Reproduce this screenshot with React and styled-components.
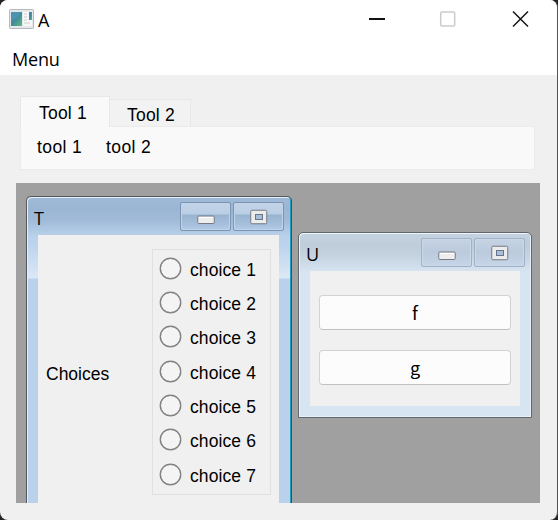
import React from "react";
import styled, { createGlobalStyle } from "styled-components";

const GlobalStyle = createGlobalStyle`
  * { box-sizing: border-box; }
  body { margin: 0; background: #242424; overflow: hidden; }
`;

const AppWindow = styled.div`
  width: 558px;
  height: 520px;
  display: flex;
  flex-direction: column;
  background: #f0f0f0;
  border-right: 1px solid #555;
  border-radius: 8px;
  overflow: hidden;
  color: #000;
  font-family: "Liberation Sans", sans-serif;
`;

const TitleBar = styled.header`
  height: 38px;
  flex: none;
  display: flex;
  align-items: center;
  padding-left: 9px;
  background: #fff;
`;

const AppTitle = styled.span`
  flex: 1;
  margin-left: 4px;
  padding-top: 1px;
  font: 18px/24px "Open Sans", sans-serif;
`;

const Controls = styled.div`
  display: flex;
  height: 38px;
`;

const MenuBar = styled.nav`
  height: 37px;
  flex: none;
  padding: 9px 12px;
  background: #fff;
  font: 18px/24px "Open Sans", sans-serif;
  letter-spacing: -0.2px;
`;

const Ribbon = styled.section`
  margin: 21px 22px 0 20px;
  flex: none;
`;

const TabList = styled.div`
  display: flex;
  align-items: flex-end;
  height: 30px;
`;

const Tab = styled.div`
  width: ${(p) => (p.$active ? 90 : 81)}px;
  height: ${(p) => (p.$active ? 31 : 27)}px;
  margin-bottom: ${(p) => (p.$active ? -1 : 0)}px;
  position: relative;
  border: 1px solid #e8e8e8;
  border-bottom: 0;
  border-left-width: ${(p) => (p.$active ? 1 : 0)}px;
  background: ${(p) => (p.$active ? "#f9f9f9" : "#f2f2f2")};
  padding: ${(p) => (p.$active ? "4px 0 0 18px" : "3px 0 0 17px")};
`;

const Label = styled.span`
  display: inline-block;
  font: 17.5px/25px "Liberation Sans", sans-serif;
  line-height: ${(p) => p.$line || 25}px;
  white-space: nowrap;
  letter-spacing: ${(p) => p.$spacing || 0}px;
`;

const ToolRow = styled.div`
  height: 44px;
  display: flex;
  padding: 8px 0 0 16px;
  background: #f9f9f9;
  border: 1px solid #ebebeb;
`;

const Tool = styled.div`
  width: 69px;
`;

const Workspace = styled.main`
  position: relative;
  width: 524px;
  height: 320px;
  margin: 13px 0 0 16px;
  background: #a0a0a0;
  overflow: hidden;
`;

const ChildWindow = styled.section`
  position: absolute;
  left: ${(p) => p.$x}px;
  top: ${(p) => p.$y}px;
  width: ${(p) => p.$w}px;
  height: ${(p) => p.$h}px;
  display: flex;
  flex-direction: column;
  padding: 0 ${(p) => (p.$active ? 12 : 11)}px 11px 11px;
  border: 1px solid ${(p) => (p.$active ? "#55595d" : "#62676c")};
  border-right-color: ${(p) => (p.$active ? "#255b69" : "#62676c")};
  border-radius: 5px 5px 0 0;
  box-shadow: ${(p) =>
    p.$active
      ? "inset 1px 1px #e4effa, inset -1px 0 #249bbd"
      : "inset 1px 1px #edf5fc, inset -1px -1px #e5f2fc"};
  background: ${(p) =>
    p.$active
      ? "linear-gradient(#9fbad7 0, #9bb6d4 12px, #a0bad7 23px, #b9d1ea 39px, #bcd3ed 48px, #dce8f5 81px, #b9d1ea 82px)"
      : "linear-gradient(#c5d2df 0, #bfcddb 12px, #c5d2e0 23px, #d7e4f2 39px)"};
`;

const ChildTitleBar = styled.header`
  height: 38px;
  flex: none;
  display: flex;
  gap: 2px;
  padding-top: 5px;
  margin: 0 -5px 0 -4px;
`;

const ChildTitle = styled.span`
  flex: 1;
  padding-top: 4px;
  font: 18px/25px "Open Sans", sans-serif;
`;

const FrameButton = styled.div`
  width: 51px;
  height: 29px;
  display: grid;
  place-items: center;
  border: 1px solid ${(p) => (p.$active ? "#7d94b2" : "#a1b1c8")};
  border-radius: 2px;
  box-shadow: inset 0 0 0 1px ${(p) => (p.$active ? "#c0d2e6" : "#cad8e8")};
  background: ${(p) =>
    p.$active
      ? "linear-gradient(#c2d4e9 0, #b9cde4 11px, #98b4d1 12px, #a7c0dc 22px, #b9d0ea 29px)"
      : "linear-gradient(#c5d3e4, #bccadd 13px, #c6d5e7)"};
`;

const Content = styled.div`
  flex: 1;
  min-height: 0;
  background: #f0f0f0;
`;

const ChoiceForm = styled(Content)`
  display: flex;
  justify-content: space-between;
  padding: 14px 8px 0 8px;
`;

const FieldLabel = styled.div`
  padding-top: 113px;
`;

const RadioGroup = styled.div`
  width: 119px;
  height: 246px;
  padding: 1px 0 0 7px;
  border: 1px solid #e0e0e0;
`;

const RadioRow = styled.label`
  height: 34.35px;
  display: flex;
  align-items: center;
  gap: 9px;
`;

const RadioCircle = styled.span`
  width: 21px;
  height: 21px;
  flex: none;
  border: 1.5px solid #777;
  border-radius: 50%;
  background: #f4f4f4;
  box-shadow: 0 0 0 0.4px #888;
`;

const RadioText = styled(Label)`
  padding-top: 4px;
`;

const ButtonStack = styled(Content)`
  display: flex;
  flex-direction: column;
  gap: 20px;
  padding: 24px 9px;
`;

const PushButton = styled.button`
  height: 35px;
  flex: none;
  padding: 0;
  border: 1px solid #d2d2d2;
  border-bottom-color: #c2c2c2;
  border-radius: 4px;
  background: #fcfcfc;
  color: #000;
`;

const ButtonText = styled.span`
  font: 18px/25px "Noto Sans CJK JP", sans-serif;
`;

function AppIcon() {
  return (
    <svg width="25" height="20" viewBox="0 0 25 20">
      <defs>
        <linearGradient id="appArt" x1="0" y1="0" x2="1" y2="1">
          <stop stopColor="#4385ae" />
          <stop offset=".5" stopColor="#428d9c" />
          <stop offset="1" stopColor="#65b879" />
        </linearGradient>
      </defs>
      <rect x=".5" y=".5" width="24" height="19" rx=".7" fill="#e5e8eb" stroke="#b5babf" />
      <path d="M2 3H13V17H2Z" fill="url(#appArt)" />
      <path d="M2 11Q8 10 12 3H2Z" fill="#5e9fbf" opacity=".45" />
      <path d="M14 3H23V17H14Z" fill="#f8f8f8" />
      <path d="M15 5H18M15 8H18M15 11H18M15 14H21" stroke="#c9cdd1" />
      <path d="M20 3H23V11H20Z" fill="url(#appArt)" />
    </svg>
  );
}

function WindowControls() {
  return (
    <Controls>
      <svg width="190" height="38" viewBox="367 0 190 38" fill="none">
        <path d="M369 19H385" stroke="#111" strokeWidth="2" />
        <rect x="440.7" y="12" width="14" height="14" rx="1.2" stroke="#ccc" strokeWidth="1.5" />
        <path d="M513 11.5L528 26.5M528 11.5L513 26.5" stroke="#151515" strokeWidth="1.5" />
      </svg>
    </Controls>
  );
}

function MinimizeGlyph() {
  return (
    <svg width="18" height="18" viewBox="0 0 18 18">
      <rect x=".75" y="8" width="16.5" height="7.5" rx="1" fill="#eee" stroke="#747b84" />
      <path d="M2 9.5H16" stroke="#fff" />
    </svg>
  );
}

function MaximizeGlyph() {
  return (
    <svg width="18" height="16" viewBox="0 0 18 16">
      <rect x=".75" y="1.25" width="16" height="13.5" rx="1" fill="#ececec" stroke="#747b84" />
      <rect x="5.5" y="5.5" width="7" height="5" fill="#a7bfd9" stroke="#66758b" />
    </svg>
  );
}

function Frame({ title, active, x, y, w, h, children }) {
  return (
    <ChildWindow $active={active} $x={x} $y={y} $w={w} $h={h}>
      <ChildTitleBar>
        <ChildTitle>{title}</ChildTitle>
        <FrameButton $active={active}><MinimizeGlyph /></FrameButton>
        <FrameButton $active={active}><MaximizeGlyph /></FrameButton>
      </ChildTitleBar>
      {children}
    </ChildWindow>
  );
}

export default function App() {
  return (
    <>
      <GlobalStyle />
      <AppWindow>
        <TitleBar>
          <AppIcon />
          <AppTitle>A</AppTitle>
          <WindowControls />
        </TitleBar>
        <MenuBar>Menu</MenuBar>
        <Ribbon>
          <TabList>
            <Tab $active><Label $spacing={0.2} $line={24}>Tool 1</Label></Tab>
            <Tab><Label $spacing={0.2} $line={24}>Tool 2</Label></Tab>
          </TabList>
          <ToolRow>
            <Tool><Label $spacing={0.4}>tool 1</Label></Tool>
            <Tool><Label $spacing={0.4}>tool 2</Label></Tool>
          </ToolRow>
        </Ribbon>
        <Workspace>
          <Frame title="T" active x={10} y={13} w={266} h={340}>
            <ChoiceForm>
              <FieldLabel><Label>Choices</Label></FieldLabel>
              <RadioGroup>
                {[1, 2, 3, 4, 5, 6, 7].map((n) => (
                  <RadioRow key={n}>
                    <RadioCircle />
                    <RadioText $spacing={0.1}>{`choice ${n}`}</RadioText>
                  </RadioRow>
                ))}
              </RadioGroup>
            </ChoiceForm>
          </Frame>
          <Frame title="U" x={282} y={49} w={234} h={186}>
            <ButtonStack>
              <PushButton><ButtonText>f</ButtonText></PushButton>
              <PushButton><ButtonText>g</ButtonText></PushButton>
            </ButtonStack>
          </Frame>
        </Workspace>
      </AppWindow>
    </>
  );
}
